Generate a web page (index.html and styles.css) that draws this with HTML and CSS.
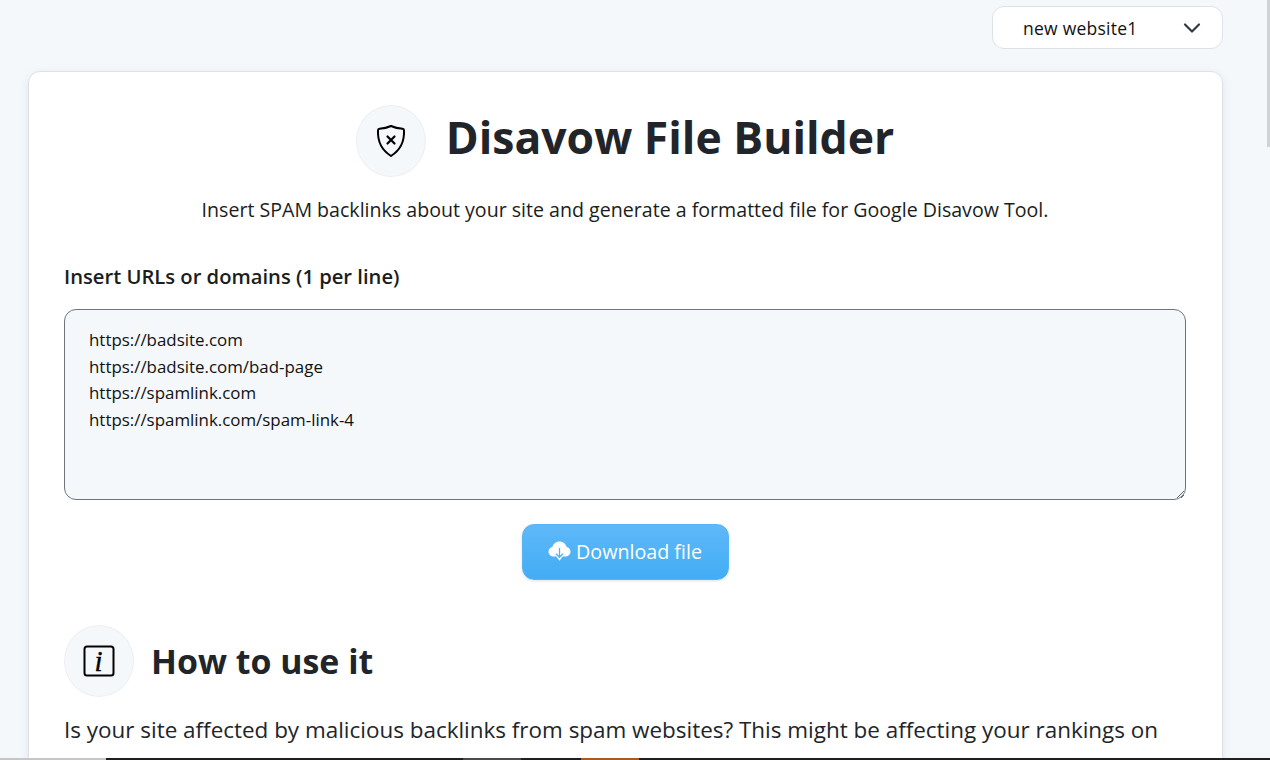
FILE: index.html
```html
<!DOCTYPE html>
<html lang="en">
<head>
<meta charset="utf-8">
<title>Disavow File Builder</title>
<link rel="stylesheet" href="styles.css">
</head>
<body>
<div class="page">
  <div class="topbar">
    <div class="site-select">
      <span>new website1</span>
      <svg class="chev" width="18" height="16" viewBox="0 0 18 16"><path d="M2 4.500 9 11.500 16 4.500" fill="none" stroke="#343a40" stroke-width="2.200" stroke-linecap="round" stroke-linejoin="round"/></svg>
    </div>
  </div>
  <main class="card">
    <header class="title-row">
      <div class="icon-circle">
        <svg width="30" height="34" viewBox="0 0 30 34" fill="none" stroke="#000" stroke-width="2" stroke-linecap="round" stroke-linejoin="round"><path d="M15 2C18.500 3.700 22.500 4.600 26.500 4.800 27.500 4.900 28 5.500 28 6.400 28.500 16.500 24.500 26 15 32 5.500 26 1.500 16.500 2 6.400 2 5.500 2.500 4.900 3.500 4.800 7.500 4.600 11.500 3.700 15 2z"/><path d="M11.500 12.500l7 7M18.500 12.500l-7 7" stroke-width="2.200"/></svg>
      </div>
      <h1>Disavow File Builder</h1>
    </header>
    <p class="lead">Insert SPAM backlinks about your site and generate a formatted file for Google Disavow Tool.</p>
    <label class="field-label" for="urls">Insert URLs or domains (1 per line)</label>
    <textarea id="urls" class="urls">https://badsite.com
https://badsite.com/bad-page
https://spamlink.com
https://spamlink.com/spam-link-4</textarea>
    <div class="actions">
      <button class="download" type="button">
        <svg width="23" height="24" viewBox="0 0 23 24"><path fill="#fff" d="M6 17.500c-3 0-5.500-2-5.500-4.800 0-2.300 1.700-4.200 3.900-4.600C5 5 7.900 2.500 11.500 2.500c3.600 0 6.500 2.500 7.100 5.600 2.200.4 3.900 2.300 3.900 4.600 0 2.800-2.500 4.800-5.500 4.800h-2.400l-3.100 4.300-3.100-4.300z"/><path d="M11.500 9v9M8 14.800l3.500 3.500 3.500-3.500" fill="none" stroke="#52b1f6" stroke-width="1.300"/></svg>
        <span>Download file</span>
      </button>
    </div>
    <section class="howto">
      <div class="howto-head">
        <div class="icon-circle">
          <svg width="32" height="32" viewBox="0 0 32 32" fill="none"><rect x="1.500" y="1.500" width="29" height="29" rx="2.500" stroke="#000" stroke-width="2"/></svg>
          <i class="info-i">i</i>
        </div>
        <h2>How to use it</h2>
      </div>
      <p class="body-text">Is your site affected by malicious backlinks from spam websites? This might be affecting your rankings on Google! Use the tool to generate a Google-ready disavow file with all the harmful links and keep your rankings safe.</p>
    </section>
  </main>
</div>
<div class="scrollbar"></div>
<div class="taskbar">
  <span class="tb-gray"></span><span class="tb-a"></span><span class="tb-b"></span><span class="tb-a2"></span><span class="tb-c"></span>
</div>
</body>
</html>
```
FILE: styles.css
```css
* { box-sizing: border-box; }
html, body { margin: 0; height: 760px; overflow: hidden; }
body {
  background: #f4f8fb;
  font-family: "Open Sans", "Noto Sans", sans-serif;
  color: #212529;
  position: relative;
}
.page { padding: 0 47px 0 28px; }
.topbar { display: flex; justify-content: flex-end; padding-top: 6px; height: 71px; }
.site-select {
  width: 231px; height: 43px;
  display: flex; align-items: center; justify-content: space-between;
  padding: 0 21px 0 30px;
  background: #fff;
  border: 1px solid #dee2e6;
  border-radius: 12px;
  font-size: 17.500px;
  letter-spacing: .25px;
  color: #111;
}
.card {
  background: #fff;
  border: 1px solid #dee2e6;
  border-radius: 12px;
  padding: 33px 36px 32px 35px;
  box-shadow: 0 2px 8px rgba(60,80,110,.1);
  height: 760px;
}
.title-row { display: flex; align-items: flex-start; justify-content: center; gap: 20px; height: 72px; }
.icon-circle {
  position: relative;
  width: 70px; height: 72px;
  flex: none;
  display: flex; align-items: center; justify-content: center;
  background: #f4f8fb;
  border: 1px solid #eceff3;
  border-radius: 50%;
}
h1 { margin: 2px 0 0; font-size: 44.500px; font-weight: 700; line-height: 60px; }
.lead { margin: 19px 0 0; text-align: center; font-size: 19.600px; line-height: 28px; color: #1a1d20; }
.field-label { display: block; margin-top: 38px; font-size: 20.200px; font-weight: 600; line-height: 28px; color: #1a1d20; }
.urls {
  display: block;
  width: 100%; height: 191px;
  margin-top: 19px;
  padding: 17px 24px;
  background: #f4f8fb;
  border: 1px solid #6c757d;
  border-radius: 12px;
  font: 16.900px/26.600px "Open Sans", "Noto Sans", sans-serif;
  color: #111;
  outline: none;
}
.actions { display: flex; justify-content: center; margin-top: 24px; }
.download {
  display: flex; align-items: center; gap: 5px;
  width: 207px; height: 56px;
  padding: 0 0 2px;
  justify-content: center;
  background: linear-gradient(#5fb8f8, #42adf5);
  border: 1px solid #58b4f6;
  border-radius: 12px;
  box-shadow: 0 1px 3px rgba(0,0,0,.12);
  color: #fff;
  font: 19.700px "Open Sans", "Noto Sans", sans-serif;
}
.howto { margin-top: 45px; }
.howto-head { display: flex; align-items: center; gap: 17px; height: 72px; }
.info-i {
  position: absolute;
  font: italic 29px/1 "Liberation Serif", serif;
  -webkit-text-stroke: .4px #000;
  color: #000;
  left: -1px; right: 0; top: 21px; text-align: center;
}
h2 { margin: 0; font-size: 33.900px; font-weight: 700; line-height: 1.2; }
.body-text { margin: 14px 0 0; font-size: 22.450px; line-height: 38px; }
.scrollbar {
  position: absolute; top: 0; right: 0; width: 3px; height: 147px;
  background: #cfd2d6;
}
.taskbar {
  position: absolute; left: 0; right: 0; bottom: 0; height: 2px;
  background: #1f1f1f;
  display: flex;
}
.tb-gray { width: 106px; background: #c6c6c6; }
.tb-a { width: 357px; }
.tb-b { width: 58px; background: #4a4a4a; }
.tb-a2 { width: 60px; }
.tb-c { width: 58px; background: #a85a20; }
```
